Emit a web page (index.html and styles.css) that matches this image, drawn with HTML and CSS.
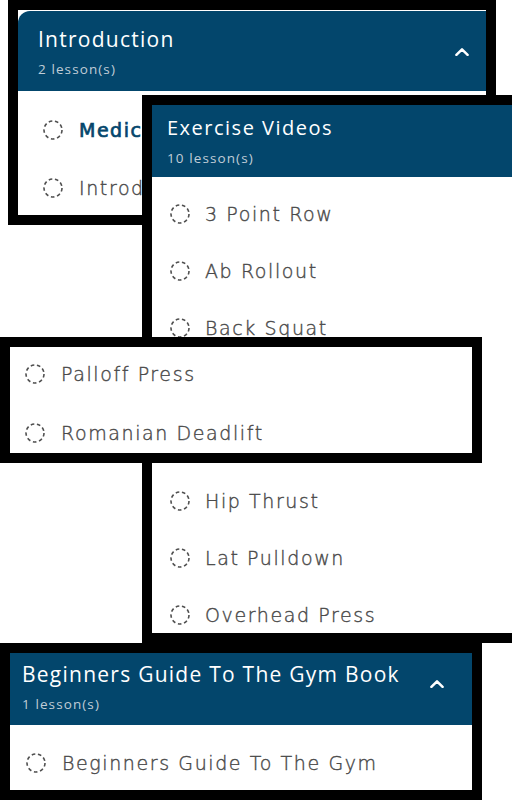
FILE: index.html
```html
<!DOCTYPE html>
<html lang="en">
<head>
<meta charset="utf-8">
<title>Course lessons</title>
<link rel="stylesheet" href="styles.css">
</head>
<body>
<div class="canvas">

  <section class="shot shot-intro">
    <header class="card-head head-intro">
      <div class="head-text">
        <h2 class="title">Introduction</h2>
        <p class="count">2 lesson(s)</p>
      </div>
      <svg class="chevron" viewBox="0 0 14 8" width="14" height="8"><polyline points="1.4,6.8 7,1.4 12.6,6.8" fill="none" stroke="#fff" stroke-width="2.5" stroke-linecap="round" stroke-linejoin="round"/></svg>
    </header>
    <ul class="lessons list-intro">
      <li class="lesson active"><svg class="ring" viewBox="0 0 20 20"><circle cx="10" cy="10" r="9" fill="none" stroke="#505050" stroke-width="1.6" stroke-dasharray="3.6 2.7"/></svg><span>Medical Disclaimer</span></li>
      <li class="lesson"><svg class="ring" viewBox="0 0 20 20"><circle cx="10" cy="10" r="9" fill="none" stroke="#505050" stroke-width="1.6" stroke-dasharray="3.6 2.7"/></svg><span>Introduction To The Program</span></li>
    </ul>
  </section>

  <section class="shot shot-videos">
    <header class="card-head head-videos">
      <div class="head-text">
        <h2 class="title title-videos">Exercise Videos</h2>
        <p class="count">10 lesson(s)</p>
      </div>
    </header>
    <ul class="lessons list-videos">
      <li class="lesson"><svg class="ring" viewBox="0 0 20 20"><circle cx="10" cy="10" r="9" fill="none" stroke="#505050" stroke-width="1.6" stroke-dasharray="3.6 2.7"/></svg><span>3 Point Row</span></li>
      <li class="lesson"><svg class="ring" viewBox="0 0 20 20"><circle cx="10" cy="10" r="9" fill="none" stroke="#505050" stroke-width="1.6" stroke-dasharray="3.6 2.7"/></svg><span>Ab Rollout</span></li>
      <li class="lesson"><svg class="ring" viewBox="0 0 20 20"><circle cx="10" cy="10" r="9" fill="none" stroke="#505050" stroke-width="1.6" stroke-dasharray="3.6 2.7"/></svg><span>Back Squat</span></li>
      <li class="lesson"><svg class="ring" viewBox="0 0 20 20"><circle cx="10" cy="10" r="9" fill="none" stroke="#505050" stroke-width="1.6" stroke-dasharray="3.6 2.7"/></svg><span>Bench Press</span></li>
      <li class="lesson"><svg class="ring" viewBox="0 0 20 20"><circle cx="10" cy="10" r="9" fill="none" stroke="#505050" stroke-width="1.6" stroke-dasharray="3.6 2.7"/></svg><span>Deadlift</span></li>
      <li class="lesson"><svg class="ring" viewBox="0 0 20 20"><circle cx="10" cy="10" r="9" fill="none" stroke="#505050" stroke-width="1.6" stroke-dasharray="3.6 2.7"/></svg><span>Hip Thrust</span></li>
      <li class="lesson"><svg class="ring" viewBox="0 0 20 20"><circle cx="10" cy="10" r="9" fill="none" stroke="#505050" stroke-width="1.6" stroke-dasharray="3.6 2.7"/></svg><span>Lat Pulldown</span></li>
      <li class="lesson"><svg class="ring" viewBox="0 0 20 20"><circle cx="10" cy="10" r="9" fill="none" stroke="#505050" stroke-width="1.6" stroke-dasharray="3.6 2.7"/></svg><span>Overhead Press</span></li>
    </ul>
  </section>

  <section class="shot shot-end">
    <ul class="lessons list-end">
      <li class="lesson"><svg class="ring" viewBox="0 0 20 20"><circle cx="10" cy="10" r="9" fill="none" stroke="#505050" stroke-width="1.6" stroke-dasharray="3.6 2.7"/></svg><span>Palloff Press</span></li>
      <li class="lesson"><svg class="ring" viewBox="0 0 20 20"><circle cx="10" cy="10" r="9" fill="none" stroke="#505050" stroke-width="1.6" stroke-dasharray="3.6 2.7"/></svg><span>Romanian Deadlift</span></li>
    </ul>
  </section>

  <section class="shot shot-book">
    <header class="card-head head-book">
      <div class="head-text">
        <h2 class="title">Beginners Guide To The Gym Book</h2>
        <p class="count">1 lesson(s)</p>
      </div>
      <svg class="chevron chevron-book" viewBox="0 0 14 8" width="14" height="8"><polyline points="1.4,6.8 7,1.4 12.6,6.8" fill="none" stroke="#fff" stroke-width="2.5" stroke-linecap="round" stroke-linejoin="round"/></svg>
    </header>
    <ul class="lessons list-book">
      <li class="lesson"><svg class="ring" viewBox="0 0 20 20"><circle cx="10" cy="10" r="9" fill="none" stroke="#505050" stroke-width="1.6" stroke-dasharray="3.6 2.7"/></svg><span>Beginners Guide To The Gym</span></li>
    </ul>
  </section>

</div>
</body>
</html>
```

FILE: styles.css
```css
* {
  box-sizing: border-box;
  margin: 0;
  padding: 0;
}

body {
  margin: 0;
  background: #fff;
}

.canvas {
  position: relative;
  width: 512px;
  height: 800px;
  overflow: hidden;
  background: #fff;
}

/* each screenshot crop is a framed "window" on the free canvas */
.shot {
  position: absolute;
  border: 10px solid #000;
  background: #fff;
  overflow: hidden;
}

.shot-intro {
  left: 8px;
  top: 0;
  width: 488px;
  height: 225px;
  padding-top: 1px;
  z-index: 1;
}

.shot-videos {
  left: 142px;
  top: 95px;
  width: 400px;
  height: 548px;
  border-right-width: 0;
  z-index: 2;
}

.shot-end {
  left: 0;
  top: 337px;
  width: 482px;
  height: 126px;
  z-index: 3;
}

.shot-book {
  left: 0;
  top: 643px;
  width: 482px;
  height: 157px;
  z-index: 3;
}

/* headers */
.card-head {
  display: flex;
  align-items: center;
  justify-content: space-between;
  background: #03466c;
  color: #fff;
}

.head-intro {
  height: 80px;
  padding: 14px 17px 13px 20px;
  border-top-left-radius: 12px;
}

.head-videos {
  height: 72px;
  padding: 10px 15px 11px 15px;
}

.head-book {
  height: 72px;
  padding: 7px 28px 12px 12px;
}

.head-text {
  display: flex;
  flex-direction: column;
  gap: 7px;
}

.head-videos .head-text {
  gap: 8px;
}

.title {
  font-family: "Open Sans", "DejaVu Sans", sans-serif;
  font-weight: 500;
  font-size: 21px;
  line-height: 28px;
  letter-spacing: 1.25px;
  white-space: nowrap;
}

.title-videos {
  font-size: 20px;
  line-height: 26px;
  letter-spacing: 1.5px;
}

.count {
  font-family: "Open Sans", "DejaVu Sans", sans-serif;
  font-weight: 500;
  font-size: 13.5px;
  line-height: 18px;
  letter-spacing: 1.1px;
  color: #c0cdd7;
  white-space: nowrap;
}

.chevron {
  flex: none;
  display: block;
}

.chevron-book {
  margin-bottom: 6px;
}

/* lesson lists */
.lessons {
  list-style: none;
}

.lesson {
  display: flex;
  align-items: center;
  height: 58px;
  color: #4a4a4a;
  font-family: "DejaVu Sans", sans-serif;
  font-weight: 300;
  font-size: 19px;
  line-height: 24px;
  letter-spacing: 1.6px;
  -webkit-text-stroke: 0.4px #4a4a4a;
  white-space: nowrap;
}

.ring {
  flex: none;
  display: block;
  width: 20px;
  height: 20px;
  margin-right: 16px;
}

.lesson.active {
  color: #03466c;
  font-weight: 400;
  -webkit-text-stroke: 0.7px #03466c;
  letter-spacing: 1.5px;
}

.list-intro {
  padding: 10px 0 0 25px;
}

.list-videos {
  padding: 8px 0 0 18px;
}

.list-videos .lesson {
  height: 57.4px;
}

.list-videos .ring {
  margin-right: 15px;
}

.list-end {
  margin-top: -2.5px;
  padding-left: 15px;
}

.list-end .lesson {
  height: 59px;
}

.list-end .ring {
  margin-right: 16px;
}

.list-book {
  padding: 9px 0 0 16px;
}
```
